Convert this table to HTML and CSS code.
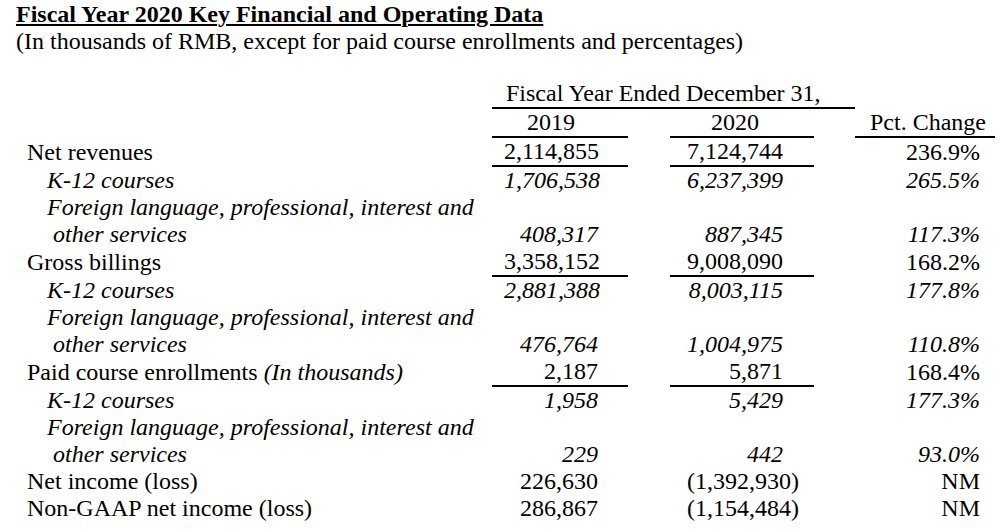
FILE: index.html
```html
<!DOCTYPE html>
<html>
<head>
<meta charset="utf-8">
<link rel="stylesheet" href="styles.css">
</head>
<body>
<div class="page">
  <header class="heading">
    <h1 class="title">Fiscal Year 2020 Key Financial and Operating Data</h1>
    <p class="subtitle">(In thousands of RMB, except for paid course enrollments and percentages)</p>
  </header>
  <table class="fin">
    <colgroup>
      <col class="c-label">
      <col class="c-y19">
      <col class="c-gap1">
      <col class="c-y20">
      <col class="c-gap2">
      <col class="c-pct">
    </colgroup>
    <tr>
      <td></td>
      <td colspan="4" class="fy uline">Fiscal Year Ended December 31,</td>
      <td></td>
    </tr>
    <tr>
      <td></td>
      <td class="y19 hd uline">2019</td>
      <td></td>
      <td class="y20 hd uline">2020</td>
      <td></td>
      <td class="pct hd uline">Pct. Change</td>
    </tr>
    <tr>
      <td class="lbl">Net revenues</td>
      <td class="y19 uline">2,114,855</td>
      <td></td>
      <td class="y20 uline">7,124,744</td>
      <td></td>
      <td class="pct">236.9%</td>
    </tr>
    <tr class="it">
      <td class="lbl sub">K-12 courses</td>
      <td class="y19">1,706,538</td>
      <td></td>
      <td class="y20">6,237,399</td>
      <td></td>
      <td class="pct">265.5%</td>
    </tr>
    <tr class="it">
      <td class="lbl sub"><span class="ln">Foreign language, professional, interest and</span><span class="ln cont">other services</span></td>
      <td class="y19">408,317</td>
      <td></td>
      <td class="y20">887,345</td>
      <td></td>
      <td class="pct">117.3%</td>
    </tr>
    <tr>
      <td class="lbl">Gross billings</td>
      <td class="y19 uline">3,358,152</td>
      <td></td>
      <td class="y20 uline">9,008,090</td>
      <td></td>
      <td class="pct">168.2%</td>
    </tr>
    <tr class="it">
      <td class="lbl sub">K-12 courses</td>
      <td class="y19">2,881,388</td>
      <td></td>
      <td class="y20">8,003,115</td>
      <td></td>
      <td class="pct">177.8%</td>
    </tr>
    <tr class="it">
      <td class="lbl sub"><span class="ln">Foreign language, professional, interest and</span><span class="ln cont">other services</span></td>
      <td class="y19">476,764</td>
      <td></td>
      <td class="y20">1,004,975</td>
      <td></td>
      <td class="pct">110.8%</td>
    </tr>
    <tr>
      <td class="lbl">Paid course enrollments <i>(In thousands)</i></td>
      <td class="y19 uline">2,187</td>
      <td></td>
      <td class="y20 uline">5,871</td>
      <td></td>
      <td class="pct">168.4%</td>
    </tr>
    <tr class="it">
      <td class="lbl sub">K-12 courses</td>
      <td class="y19">1,958</td>
      <td></td>
      <td class="y20">5,429</td>
      <td></td>
      <td class="pct">177.3%</td>
    </tr>
    <tr class="it">
      <td class="lbl sub"><span class="ln">Foreign language, professional, interest and</span><span class="ln cont">other services</span></td>
      <td class="y19">229</td>
      <td></td>
      <td class="y20">442</td>
      <td></td>
      <td class="pct">93.0%</td>
    </tr>
    <tr>
      <td class="lbl">Net income (loss)</td>
      <td class="y19">226,630</td>
      <td></td>
      <td class="y20">(1,392,930<span class="paren">)</span></td>
      <td></td>
      <td class="pct">NM</td>
    </tr>
    <tr>
      <td class="lbl">Non-GAAP net income (loss)</td>
      <td class="y19">286,867</td>
      <td></td>
      <td class="y20">(1,154,484<span class="paren">)</span></td>
      <td></td>
      <td class="pct">NM</td>
    </tr>
  </table>
</div>
</body>
</html>
```

FILE: styles.css
```css
html, body {
  margin: 0;
  padding: 0;
  background: #ffffff;
}

body {
  font-family: "Liberation Serif", "Times New Roman", serif;
  color: #000000;
}

.page {
  width: 1005px;
}

.heading {
  padding: 1px 0 0 16px;
}

.title {
  margin: 0;
  font-size: 24px;
  line-height: 27px;
  font-weight: bold;
  text-decoration: underline;
  text-decoration-thickness: 2px;
  text-underline-offset: 2px;
}

.subtitle {
  margin: 0;
  font-size: 24px;
  line-height: 27px;
}

.fin {
  margin-top: 25px;
  border-collapse: collapse;
  table-layout: fixed;
  width: 995px;
  font-size: 24px;
  line-height: 27px;
}

.c-label { width: 492px; }
.c-y19 { width: 136px; }
.c-gap1 { width: 42px; }
.c-y20 { width: 144px; }
.c-gap2 { width: 41px; }
.c-pct { width: 140px; }

.fin td {
  padding: 0;
  vertical-align: bottom;
  white-space: nowrap;
}

.fin .uline {
  border-bottom: 2px solid #000000;
}

.fin .lbl {
  padding-left: 27px;
  text-align: left;
}

.fin .lbl.sub {
  padding-left: 47px;
}

.fin .ln {
  display: block;
}

.fin .ln.cont {
  padding-left: 6px;
}

.fin .it td {
  font-style: italic;
}

.fin .y19 {
  padding-left: 12px;
  padding-right: 30px;
  text-align: right;
}

.fin .y20 {
  padding-left: 17px;
  padding-right: 31px;
  text-align: right;
}

.fin .pct {
  padding-left: 15px;
  padding-right: 15px;
  text-align: right;
}

.fin .hd {
  text-align: center;
}

.fin .fy {
  padding-left: 14px;
  padding-right: 37px;
  text-align: center;
}

.paren {
  margin-right: -8px;
}
```
